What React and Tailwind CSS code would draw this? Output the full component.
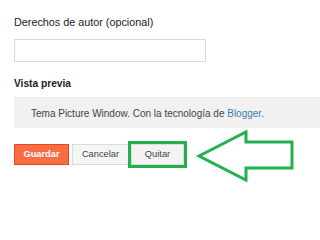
import React from 'react';

const Arrow = () => (
  <svg className="absolute left-0 top-0 pointer-events-none" width="320" height="209" viewBox="0 0 320 209">
    <polygon
      points="199,156 246,132 246,142 292,142 292,168 246,168 246,180"
      fill="none"
      stroke="#22b14c"
      strokeWidth="3"
      strokeLinejoin="miter"
    />
  </svg>
);

export default function App() {
  return (
    <div className="relative w-[320px] h-[209px] overflow-hidden bg-white pl-[14px] pt-[16px] font-['Liberation_Sans',Arial,sans-serif]">
      <label className="block text-[10.8px] leading-[13px] text-[#222]">Derechos de autor (opcional)</label>
      <input
        type="text"
        className="mt-[10px] block w-[192px] h-[23px] border border-[#d9d9d9] bg-white outline-none"
      />
      <div className="mt-[15px] text-[10.2px] leading-[13px] font-bold text-[#222]">Vista previa</div>

      <div className="mt-[7px] h-[31px] bg-[#f1f1f1] border-t border-[#e8e8e8] pl-[17px] flex items-center text-[10px] text-[#444]">
        <span>
          Tema Picture Window. Con la tecnología de <span className="text-[#3d7bb0]">Blogger</span>.
        </span>
      </div>

      <div className="mt-[16px] flex items-center">
        <button className="w-[55px] h-[21px] bg-[#f96c44] border border-[#e9461c] text-white text-[9.3px] font-bold">
          Guardar
        </button>
        <button className="ml-[3px] w-[57px] h-[21px] bg-[#f5f5f5] border border-[#dcdcdc] text-[#444] text-[9.3px]">
          Cancelar
        </button>
        <span className="relative ml-[2px] block">
          <button className="block w-[53px] h-[21px] bg-[#f3f3f3] border border-[#dcdcdc] text-[#444] text-[9.3px]">
            Quitar
          </button>
          <span className="absolute -left-[3px] -top-[3px] -right-[3px] -bottom-[3px] border-[3px] border-[#22b14c]" />
        </span>
      </div>

      <Arrow />
    </div>
  );
}
